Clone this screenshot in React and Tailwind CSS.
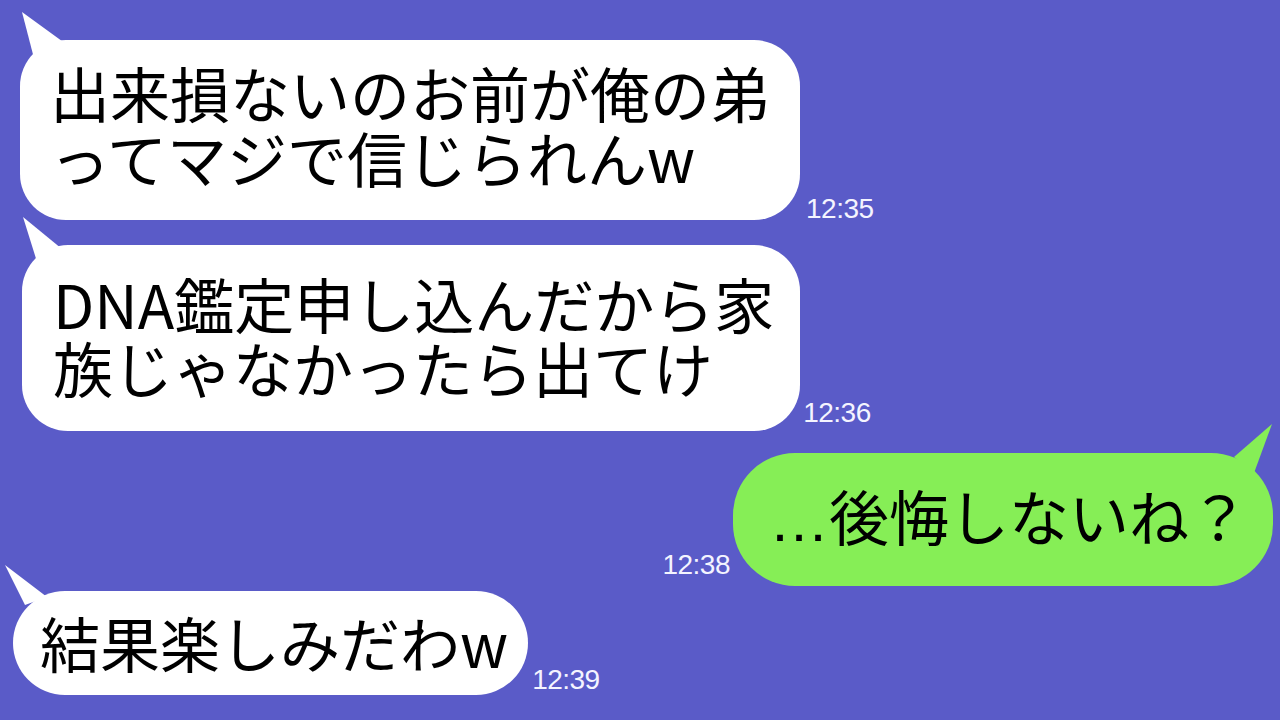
import React from 'react';

const JP = { fontFamily: '"Noto Sans CJK JP", "Noto Sans", sans-serif' };

const Time = ({ children, className = '' }) => (
  <span
    className={`text-[28px] leading-none text-[#f4f4ff] tracking-[-0.5px] ${className}`}
    style={{ fontFamily: '"Liberation Sans Narrow", "Liberation Sans", sans-serif' }}
  >
    {children}
  </span>
);

const TailLeft = ({ points }) => (
  <svg className="absolute left-0 top-0 overflow-visible" width="1" height="1">
    <polygon points={points} fill="#ffffff" />
  </svg>
);

const App = () => {
  return (
    <div className="w-[1280px] h-[720px] bg-[#5a5bc8] overflow-hidden flex flex-col" style={JP}>
      {/* 1 */}
      <div className="flex items-end pl-[20px] pt-[40px]">
        <div className="relative bg-white rounded-[46px] pl-[30px] pr-[30px] pt-[19px] pb-[31px] text-[60px] leading-[65px] text-black">
          <TailLeft points="2,-28 46,4 16,26" />
          <div>出来損ないのお前が俺の弟</div>
          <div>ってマジで信じられんw</div>
        </div>
        <Time className="ml-[6px] mb-[-3px]">12:35</Time>
      </div>

      {/* 2 */}
      <div className="flex items-end pl-[22px] mt-[25px]">
        <div className="relative bg-white rounded-[46px] pl-[31px] pr-[26px] pt-[26px] pb-[32px] text-[60px] leading-[64px] text-black">
          <TailLeft points="1,-28 40,4 16,20" />
          <div>DNA鑑定申し込んだから家</div>
          <div>族じゃなかったら出てけ</div>
        </div>
        <Time className="ml-[3px] mb-[4px]">12:36</Time>
      </div>

      {/* 3 */}
      <div className="flex items-end justify-end pr-[7px] mt-[22px]">
        <Time className="mr-[3px] mb-[7px]">12:38</Time>
        <div className="relative bg-[#86ee56] rounded-[62px] pl-[36px] pr-[24px] pt-[26px] pb-[29px] text-[60px] leading-[72px] text-black">
          <svg className="absolute right-0 top-0 overflow-visible" width="1" height="1">
            <polygon points="0,-29 -38,4 -18,20" fill="#86ee56" />
          </svg>
          <span style={{ fontFamily: '"Liberation Sans", sans-serif' }}>…</span>後悔しないね？
        </div>
      </div>

      {/* 4 */}
      <div className="flex items-end pl-[13px] mt-[5px]">
        <div className="relative bg-white rounded-full pl-[27px] pr-[20px] pt-[16px] pb-[18px] text-[60px] leading-[70px] text-black">
          <TailLeft points="-8,-26 34,6 12,14" />
          結果楽しみだわw
        </div>
        <Time className="ml-[4px] mb-[1px]">12:39</Time>
      </div>
    </div>
  );
};

export default App;
